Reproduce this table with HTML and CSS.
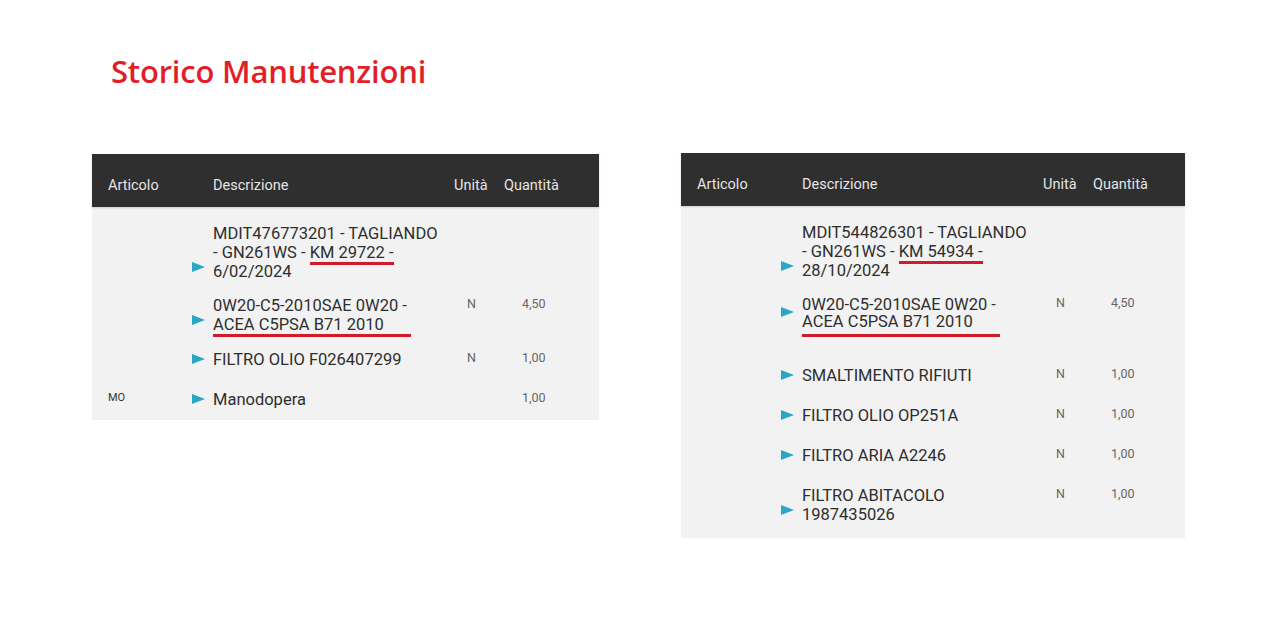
FILE: index.html
```html
<!DOCTYPE html>
<html lang="it">
<head>
<meta charset="utf-8">
<title>Storico Manutenzioni</title>
<link rel="stylesheet" href="styles.css">
</head>
<body>
<main class="page">
  <h1 class="title">Storico Manutenzioni</h1>
  <div class="tables">
    <section class="table table-left">
      <div class="thead">
        <div class="th">Articolo</div>
        <div class="th"></div>
        <div class="th">Descrizione</div>
        <div class="th">Unità</div>
        <div class="th">Quantità</div>
      </div>
      <div class="tbody">
        <div class="row row-multi">
          <div class="cell-art"></div>
          <div class="cell-arrow"><span class="arrow"></span></div>
          <div class="cell-desc">MDIT476773201 - TAGLIANDO<br>- GN261WS - <span class="mark">KM 29722 -</span><br>6/02/2024</div>
          <div class="cell-small cell-unit"></div>
          <div class="cell-small cell-qty"></div>
        </div>
        <div class="row row-multi row-r2">
          <div class="cell-art"></div>
          <div class="cell-arrow"><span class="arrow"></span></div>
          <div class="cell-desc">0W20-C5-2010SAE 0W20 -<br><span class="mark mark-wide">ACEA C5PSA B71 2010</span></div>
          <div class="cell-small cell-unit">N</div>
          <div class="cell-small cell-qty">4,50</div>
        </div>
        <div class="row">
          <div class="cell-art"></div>
          <div class="cell-arrow"><span class="arrow"></span></div>
          <div class="cell-desc">FILTRO OLIO F026407299</div>
          <div class="cell-small cell-unit">N</div>
          <div class="cell-small cell-qty">1,00</div>
        </div>
        <div class="row">
          <div class="cell-small cell-art">MO</div>
          <div class="cell-arrow"><span class="arrow"></span></div>
          <div class="cell-desc">Manodopera</div>
          <div class="cell-small cell-unit"></div>
          <div class="cell-small cell-qty">1,00</div>
        </div>
      </div>
    </section>

    <section class="table table-right">
      <div class="thead">
        <div class="th">Articolo</div>
        <div class="th"></div>
        <div class="th">Descrizione</div>
        <div class="th">Unità</div>
        <div class="th">Quantità</div>
      </div>
      <div class="tbody tbody-right">
        <div class="row row-multi">
          <div class="cell-art"></div>
          <div class="cell-arrow"><span class="arrow"></span></div>
          <div class="cell-desc">MDIT544826301 - TAGLIANDO<br>- GN261WS - <span class="mark">KM 54934 -</span><br>28/10/2024</div>
          <div class="cell-small cell-unit"></div>
          <div class="cell-small cell-qty"></div>
        </div>
        <div class="row row-multi row-tall">
          <div class="cell-art"></div>
          <div class="cell-arrow arrow-mid"><span class="arrow"></span></div>
          <div class="cell-desc">0W20-C5-2010SAE 0W20 -<br><span class="mark mark-wide mark-low">ACEA C5PSA B71 2010</span></div>
          <div class="cell-small cell-unit">N</div>
          <div class="cell-small cell-qty">4,50</div>
        </div>
        <div class="row">
          <div class="cell-art"></div>
          <div class="cell-arrow"><span class="arrow"></span></div>
          <div class="cell-desc">SMALTIMENTO RIFIUTI</div>
          <div class="cell-small cell-unit">N</div>
          <div class="cell-small cell-qty">1,00</div>
        </div>
        <div class="row">
          <div class="cell-art"></div>
          <div class="cell-arrow"><span class="arrow"></span></div>
          <div class="cell-desc">FILTRO OLIO OP251A</div>
          <div class="cell-small cell-unit">N</div>
          <div class="cell-small cell-qty">1,00</div>
        </div>
        <div class="row">
          <div class="cell-art"></div>
          <div class="cell-arrow"><span class="arrow"></span></div>
          <div class="cell-desc">FILTRO ARIA A2246</div>
          <div class="cell-small cell-unit">N</div>
          <div class="cell-small cell-qty">1,00</div>
        </div>
        <div class="row row-multi">
          <div class="cell-art"></div>
          <div class="cell-arrow"><span class="arrow"></span></div>
          <div class="cell-desc">FILTRO ABITACOLO<br>1987435026</div>
          <div class="cell-small cell-unit">N</div>
          <div class="cell-small cell-qty">1,00</div>
        </div>
      </div>
    </section>
  </div>
</main>
</body>
</html>
```

FILE: styles.css
```css
* {
  box-sizing: border-box;
}

html, body {
  margin: 0;
  padding: 0;
  background: #ffffff;
}

body {
  font-family: Roboto, "Liberation Sans", Arial, sans-serif;
  color: #303030;
}

.page {
  width: 1280px;
  height: 644px;
  padding-top: 53px;
}

.title {
  margin: 0 0 65px 0;
  padding-left: 111px;
  font-family: "Open Sans", "Liberation Sans", sans-serif;
  font-weight: 600;
  font-size: 31px;
  line-height: 36px;
  color: #e01f2b;
  letter-spacing: -0.2px;
}

.tables {
  display: flex;
  align-items: flex-start;
  gap: 82px;
  padding-left: 92px;
}

.table-left {
  width: 507px;
}

.table-right {
  width: 504px;
  margin-top: -1px;
}

.thead,
.row {
  display: grid;
  grid-template-columns: 100px 21px 241px 50px 1fr;
}

.thead {
  height: 53px;
  background: #2f2f2f;
  padding-top: 23px;
  box-shadow: 0 1px 2px rgba(0, 0, 0, 0.15);
  position: relative;
}

.th {
  font-size: 14.5px;
  line-height: 18px;
  color: #e4e4e4;
  font-weight: 400;
}

.th:first-child {
  padding-left: 16px;
}

.tbody {
  background: #f2f2f2;
  padding: 7px 0 0 0;
}

.tbody-right {
  padding-bottom: 9px;
}

.row {
  align-items: start;
  padding: 10px 0 11px 0;
}

.row-multi {
  padding-bottom: 5px;
}

.row-r2 {
  padding-bottom: 6px;
}

.row-tall {
  padding-bottom: 19px;
}

.cell-desc {
  font-size: 16.5px;
  line-height: 19px;
  font-weight: 400;
  color: #2e2e2e;
}

.cell-small {
  font-size: 12.5px;
  line-height: 15px;
  color: #666666;
}

.cell-art {
  padding-left: 16px;
  font-size: 11px;
  color: #333333;
}

.cell-unit {
  padding-left: 13px;
}

.cell-qty {
  padding-left: 18px;
}

.cell-arrow {
  align-self: end;
  display: flex;
  margin-bottom: 5px;
}

.row-multi .cell-arrow {
  margin-bottom: 9px;
}

.row-multi .cell-arrow.arrow-mid {
  margin-bottom: 20px;
}

.arrow {
  display: block;
  width: 0;
  height: 0;
  border-top: 5px solid transparent;
  border-bottom: 5px solid transparent;
  border-left: 13px solid #2aa6c6;
}

.mark {
  border-bottom: 3px solid #cf1b2b;
}

.mark-wide {
  padding-right: 27px;
}

.mark-low {
  display: inline-block;
  line-height: 17px;
  padding-bottom: 4px;
  vertical-align: top;
  margin-top: -1px;
}
```
